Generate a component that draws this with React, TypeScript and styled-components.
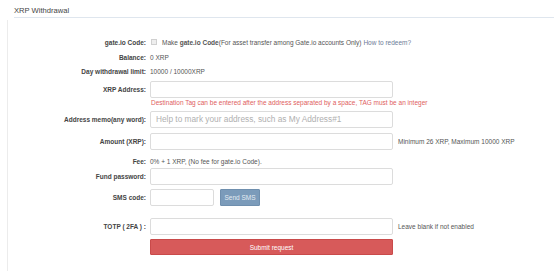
import React from 'react';
import styled, { createGlobalStyle } from 'styled-components';

const GlobalStyle = createGlobalStyle`
  html, body {
    margin: 0;
    padding: 0;
    background: #fff;
  }
  body {
    font-family: 'Liberation Sans', Arial, sans-serif;
    color: #555;
  }
`;

const Page = styled.div`
  width: 554px;
  height: 271px;
  overflow: hidden;
  background: #fff;
`;

const Header = styled.div`
  margin-left: 14px;
  height: 18px;
  border-bottom: 1px solid #dfe6ee;
  box-sizing: border-box;
  display: flex;
  align-items: center;
  padding-top: 3px;
`;

const Title = styled.h2`
  margin: 0;
  font-size: 7.6px;
  font-weight: normal;
  color: #444;
`;

const Body = styled.div`
  margin-left: 7px;
  margin-top: 2px;
  height: 251px;
  border-left: 1px solid #ececec;
  display: flex;
  flex-direction: column;
`;

const Row = styled.div<{ $top: number; $h?: number }>`
  display: flex;
  align-items: center;
  margin-top: ${(p) => p.$top}px;
  height: ${(p) => p.$h ?? 17}px;
`;

const Label = styled.label`
  width: 138px;
  flex-shrink: 0;
  text-align: right;
  font-size: 6.5px;
  font-weight: bold;
  color: #444;
  padding-right: 4px;
`;

const Value = styled.span`
  font-size: 6.5px;
  color: #555;
`;

const Field = styled.input<{ $w?: number }>`
  width: ${(p) => p.$w ?? 243}px;
  height: 17px;
  box-sizing: border-box;
  border: 1px solid #dcdcdc;
  border-radius: 2px;
  padding: 0 5px;
  font-family: inherit;
  font-size: 8.3px;
  outline: none;
  &::placeholder {
    color: #b0b0b0;
  }
`;

const Note = styled.span`
  font-size: 6.5px;
  color: #555;
  margin-left: 5px;
`;

const Hint = styled.div`
  margin-left: 143px;
  font-size: 6.5px;
  color: #e06060;
  height: 10px;
  line-height: 10px;
`;

const Check = styled.span`
  width: 4px;
  height: 4px;
  border: 1px solid #d0d0d0;
  background: #eee;
  margin: 0 5px 0 1px;
`;

const Link = styled.a`
  color: #6c7c96;
  text-decoration: none;
  margin-left: 2px;
`;

const SmsButton = styled.button`
  margin-left: 6px;
  width: 40px;
  height: 17px;
  border: 1px solid #6f8fae;
  background: #7b9bba;
  color: #e4ebf2;
  font-family: inherit;
  font-size: 6.5px;
  border-radius: 1px;
  padding: 0;
`;

const Submit = styled.button`
  width: 243px;
  height: 16px;
  border: 1px solid #c94a4a;
  background: #d75a5a;
  color: #fff;
  font-family: inherit;
  font-size: 6.5px;
  border-radius: 1px;
  padding: 0;
`;

const Spacer = styled.span`
  width: 142px;
  flex-shrink: 0;
`;

export default function App() {
  return (
    <Page>
      <GlobalStyle />
      <Header>
        <Title>XRP Withdrawal</Title>
      </Header>
      <Body>
        <Row $top={15} $h={14}>
          <Label>gate.io Code:</Label>
          <Check />
          <Value>
            Make <b>gate.io Code</b>(For asset transfer among Gate.io accounts Only)
            <Link href="#">How to redeem?</Link>
          </Value>
        </Row>
        <Row $top={1} $h={14}>
          <Label>Balance:</Label>
          <Value>0 XRP</Value>
        </Row>
        <Row $top={0} $h={14}>
          <Label>Day withdrawal limit:</Label>
          <Value>10000 / 10000XRP</Value>
        </Row>
        <Row $top={3}>
          <Label>XRP Address:</Label>
          <Field />
        </Row>
        <Hint>Destination Tag can be entered after the address separated by a space, TAG must be an integer</Hint>
        <Row $top={3} $h={16}>
          <Label>Address memo(any word):</Label>
          <Field placeholder="Help to mark your address, such as My Address#1" />
        </Row>
        <Row $top={6}>
          <Label>Amount (XRP):</Label>
          <Field />
          <Note>Minimum 26 XRP, Maximum 10000 XRP</Note>
        </Row>
        <Row $top={4} $h={14}>
          <Label>Fee:</Label>
          <Value>0% + 1 XRP, (No fee for gate.io Code).</Value>
        </Row>
        <Row $top={0}>
          <Label>Fund password:</Label>
          <Field />
        </Row>
        <Row $top={4}>
          <Label>SMS code:</Label>
          <Field $w={64} />
          <SmsButton>Send SMS</SmsButton>
        </Row>
        <Row $top={12}>
          <Label>TOTP ( 2FA ) :</Label>
          <Field />
          <Note>Leave blank if not enabled</Note>
        </Row>
        <Row $top={4} $h={16}>
          <Spacer />
          <Submit>Submit request</Submit>
        </Row>
      </Body>
    </Page>
  );
}
